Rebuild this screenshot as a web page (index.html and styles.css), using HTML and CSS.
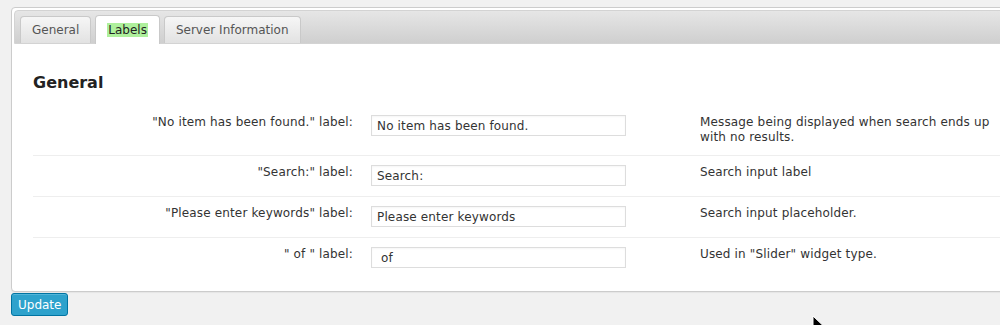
FILE: index.html
```html
<!DOCTYPE html>
<html lang="en">
<head>
    <meta charset="UTF-8">
    <title>Labels</title>
    <link rel="stylesheet" href="styles.css">
</head>
<body>
    <div class="wrap">
        <div class="panel">
            <div class="tabs">
                <a class="tab">General</a>
                <a class="tab active"><span class="hl">Labels</span></a>
                <a class="tab">Server Information</a>
            </div>
            <div class="content">
                <h2 class="title">General</h2>
                <table class="form-table">
                    <tr>
                        <th>"No item has been found." label:</th>
                        <td class="field"><input type="text" value="No item has been found."></td>
                        <td class="desc">Message being displayed when search ends up with no results.</td>
                    </tr>
                    <tr>
                        <th>"Search:" label:</th>
                        <td class="field"><input type="text" value="Search:"></td>
                        <td class="desc">Search input label</td>
                    </tr>
                    <tr>
                        <th>"Please enter keywords" label:</th>
                        <td class="field"><input type="text" value="Please enter keywords"></td>
                        <td class="desc">Search input placeholder.</td>
                    </tr>
                    <tr>
                        <th>" of " label:</th>
                        <td class="field"><input type="text" value=" of "></td>
                        <td class="desc">Used in "Slider" widget type.</td>
                    </tr>
                </table>
            </div>
        </div>
        <button class="button-primary">Update</button>
    </div>

    <svg class="cursor" width="12" height="18" viewBox="0 0 12 18">
        <path d="M1 1 L1 15 L4.5 11.5 L7 17 L9 16 L6.5 10.5 L11 10.5 Z" fill="#000" stroke="#fff" stroke-width="1"/>
    </svg>
</body>
</html>
```

FILE: styles.css
```css
html, body {
    margin: 0;
    overflow: hidden;
}
body {
    background: #f1f1f1;
    font-family: "DejaVu Sans", Verdana, sans-serif;
    font-size: 12px;
    color: #333;
    height: 325px;
    position: relative;
}
.wrap {
    padding: 7px 0 0 11px;
    width: 1040px;
}
.panel {
    background: #fff;
    border: 1px solid #ccc;
    border-radius: 4px;
    padding: 2px;
    box-shadow: 0 1px 1px rgba(0,0,0,0.05);
}
.tabs {
    display: flex;
    gap: 4px;
    height: 28px;
    padding: 4px 0 0 5px;
    background: linear-gradient(#e6e6e6, #cfcfcf);
    border: 1px solid #d3d3d3;
    border-radius: 4px 4px 0 0;
}
.tab {
    display: flex;
    align-items: center;
    padding: 0 11px;
    margin-top: 1px;
    color: #555;
    background: linear-gradient(#f6f6f6, #e2e2e2);
    border: 1px solid #c9c9c9;
    border-bottom: none;
    border-radius: 4px 4px 0 0;
}
.tab.active {
    background: #fff;
    margin-top: 0;
    margin-bottom: -1px;
    color: #222;
}
.hl {
    background: #aef09c;
    padding: 0 1px;
}
.content {
    padding: 26px 0 11px 19px;
}
.title {
    font-size: 16px;
    font-weight: bold;
    color: #222;
    margin: 0 0 10px;
    line-height: 26px;
}
.form-table {
    border-collapse: collapse;
    width: 100%;
    letter-spacing: 0.15px;
}
.form-table tr {
    border-bottom: 1px solid #eee;
}
.form-table tr:last-child {
    border-bottom: none;
}
.form-table th, .form-table td {
    padding: 9px 0 10px;
    vertical-align: top;
    line-height: 15px;
}
.form-table th {
    width: 320px;
    text-align: right;
    font-weight: normal;
    padding-right: 18px;
    color: #333;
}
.field {
    width: 329px;
}
.field input {
    box-sizing: border-box;
    width: 255px;
    height: 21px;
    margin: 0;
    padding: 0 5px;
    border: 1px solid #ddd;
    box-shadow: inset 0 1px 2px rgba(0,0,0,0.04);
    font-family: "DejaVu Sans", Verdana, sans-serif;
    font-size: 12px;
    letter-spacing: 0.15px;
    color: #333;
    display: block;
}
.desc {
    padding-right: 50px !important;
}
.button-primary {
    margin-top: 1px;
    height: 23px;
    padding: 0 6px;
    background: #2ea2cc;
    border: 1px solid #0074a2;
    border-radius: 3px;
    box-shadow: inset 0 1px 0 rgba(120,200,230,0.5);
    color: #fff;
    font-family: "DejaVu Sans", Verdana, sans-serif;
    font-size: 12px;
}
.cursor {
    position: absolute;
    left: 812px;
    top: 315px;
}
```
